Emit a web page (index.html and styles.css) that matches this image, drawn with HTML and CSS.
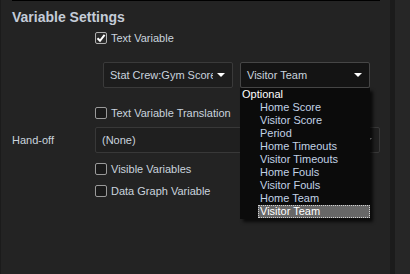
FILE: index.html
```html
<!DOCTYPE html>
<html>
<head>
	<title>variable-settings</title>
	<link rel="stylesheet" href="styles.css">
</head>
<body>
<div class="app">
	<div class="panel">
		<div class="rule"></div>
		<h2 class="title">Variable Settings</h2>
		<div class="row check-row first">
			<span class="box checked"><svg width="10" height="10" viewBox="0 0 10 10"><path d="M1.5 5.2 L4 7.8 L8.6 1.8" fill="none" stroke="#fff" stroke-width="2"/></svg></span>
			<span>Text Variable</span>
		</div>
		<div class="row select-row">
			<div class="select s1">
				<span class="val">Stat Crew:Gym Score</span>
				<span class="arrow"></span>
			</div>
			<div class="select s2">
				<span class="val">Visitor Team</span>
				<span class="arrow"></span>
				<ul class="popup">
					<li class="group">Optional</li>
					<li>Home Score</li>
					<li>Visitor Score</li>
					<li>Period</li>
					<li>Home Timeouts</li>
					<li>Visitor Timeouts</li>
					<li>Home Fouls</li>
					<li>Visitor Fouls</li>
					<li>Home Team</li>
					<li class="active">Visitor Team</li>
				</ul>
			</div>
		</div>
		<div class="row check-row translation">
			<span class="box"></span>
			<span>Text Variable Translation</span>
		</div>
		<div class="row field-row">
			<span class="label">Hand-off</span>
			<div class="combo">
				<span class="val">(None)</span>
				<span class="arrow"></span>
			</div>
		</div>
		<div class="row check-row visible">
			<span class="box"></span>
			<span>Visible Variables</span>
		</div>
		<div class="row check-row graph">
			<span class="box"></span>
			<span>Data Graph Variable</span>
		</div>
	</div>
	<div class="splitter"></div>
	<div class="side"></div>
</div>
</body>
</html>
```

FILE: styles.css
```css
*{
	margin: 0;
	padding: 0;
	list-style: none;
	box-sizing: border-box;
}
body{
	width: 410px;
	height: 274px;
	overflow: hidden;
	background: #222;
	font-family: "Liberation Sans", Arial, sans-serif;
	font-size: 11px;
	color: #cad3de;
}
.app{
	display: flex;
	height: 274px;
}
.panel{
	width: 390px;
	background: #232323;
	border-left: 1px solid #1b1b1b;
}
.splitter{
	width: 5px;
	background: #1b1b1b;
}
.side{
	flex: 1;
	background: #262626;
}
.rule{
	width: 368px;
	height: 1px;
	margin-left: 11px;
	background: #000;
}
.title{
	margin: 8px 0 0 11px;
	font-size: 14px;
	line-height: 16px;
	font-weight: bold;
	color: #c4ccd8;
}
.row{
	display: flex;
	align-items: center;
}
.check-row{
	height: 14px;
	padding-left: 94px;
}
.first{
	margin-top: 6px;
}
.translation{
	margin-top: 18px;
}
.visible{
	margin-top: 9px;
}
.graph{
	margin-top: 8px;
}
.box{
	width: 12px;
	height: 12px;
	margin-right: 4px;
	border: 1px solid #9a9a9a;
	border-radius: 2px;
	background: #1a1a1a;
	display: flex;
	align-items: center;
	justify-content: center;
}
.box.checked{
	border-color: #b0b0b0;
	background: #2a2a2a;
}
.select-row{
	margin-top: 17px;
	padding-left: 102px;
	gap: 7px;
}
.select{
	width: 130px;
	height: 26px;
	border: 1px solid #3a3a3a;
	border-radius: 2px;
	display: flex;
	align-items: center;
	position: relative;
}
.select .val{
	flex: 1;
	white-space: nowrap;
	overflow: hidden;
	padding-left: 6px;
	margin-right: 4px;
}
.s1{
	background: #1d1d1d;
}
.s2{
	background: #141414;
	border-color: #464646;
}
.arrow{
	width: 0;
	height: 0;
	border-left: 4px solid transparent;
	border-right: 4px solid transparent;
	border-top: 4px solid #fff;
	margin-right: 7px;
	flex-shrink: 0;
}
.popup{
	position: absolute;
	top: 25px;
	left: -1px;
	width: 130px;
	background: #0b0b0b;
	box-shadow: 3px 3px 3px rgba(0,0,0,0.7);
	z-index: 5;
	padding-bottom: 1px;
}
.popup li{
	height: 13px;
	line-height: 13px;
	padding-left: 20px;
	color: #c2d2e6;
	white-space: nowrap;
}
.popup li.group{
	padding-left: 2px;
	color: #fff;
}
.popup li.active{
	margin-left: 18px;
	padding-left: 1px;
	background: #676767;
	border: 1px dotted #cfcfcf;
	line-height: 11px;
	color: #fff;
}
.field-row{
	margin-top: 7px;
	padding-left: 11px;
}
.label{
	width: 83px;
}
.combo{
	width: 285px;
	height: 26px;
	border: 1px solid #383838;
	border-radius: 2px;
	background: #1f1f1f;
	display: flex;
	align-items: center;
}
.combo .val{
	flex: 1;
	padding-left: 6px;
}
```
